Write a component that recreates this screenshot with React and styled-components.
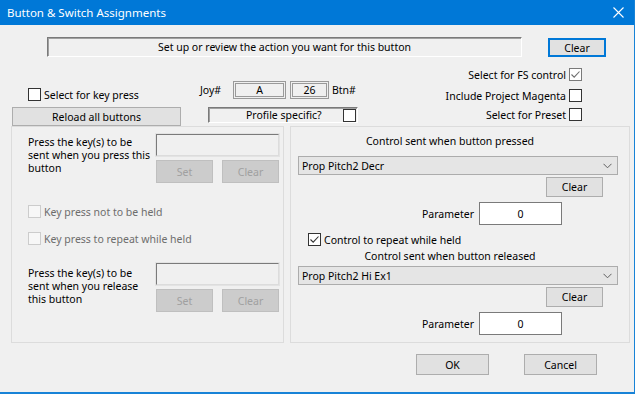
import React from "react";
import styled, { createGlobalStyle } from "styled-components";

const GlobalStyle = createGlobalStyle`
    html, body {
        margin: 0;
        padding: 0;
        background: #f0f0f0;
    }
    body {
        font-family: "Noto Sans", "Open Sans", sans-serif;
        font-size: 10.5px;
        color: #000;
    }
`;

const Window = styled.div`
    width: 635px;
    height: 394px;
    box-sizing: border-box;
    background: #f0f0f0;
    border-right: 1px solid #1883d7;
    border-bottom: 2px solid #1883d7;
    display: flex;
    flex-direction: column;
    overflow: hidden;
`;

const TitleBar = styled.div`
    height: 25px;
    flex: none;
    background: #0078d7;
    color: #fff;
    display: flex;
    align-items: center;
    justify-content: space-between;
    padding: 0 0 0 7px;
    font-size: 11.5px;
`;

const CloseBtn = styled.div`
    width: 32px;
    height: 23px;
    display: flex;
    align-items: center;
    justify-content: center;
`;

const TopRow = styled.div`
    display: flex;
    align-items: flex-start;
    margin-top: 12px;
    padding-left: 47px;
`;

const StatusBox = styled.div`
    width: 475px;
    height: 20px;
    box-sizing: border-box;
    border: 1px solid;
    border-color: #7a7a7a #fff #fff #7a7a7a;
    box-shadow: inset 1px 1px 0 #a0a0a0;
    display: flex;
    align-items: center;
    justify-content: center;
    white-space: nowrap;
`;

const Button = styled.button`
    font: inherit;
    color: ${(p) => (p.disabled ? "#a0a0a0" : "#000")};
    background: ${(p) => (p.disabled ? "#cccccc" : "#e1e1e1")};
    border: ${(p) => (p.$default ? "2px solid #0078d7" : p.disabled ? "1px solid #bfbfbf" : "1px solid #adadad")};
    width: ${(p) => p.$w || 57}px;
    height: ${(p) => p.$h || 20}px;
    padding: 0;
    margin: 0;
    box-sizing: border-box;
    display: flex;
    align-items: center;
    justify-content: center;
    flex: none;
    white-space: nowrap;
`;

const DefaultButton = styled(Button)`
    margin-left: 26px;
    margin-top: 1px;
`;

const HeaderArea = styled.div`
    display: flex;
    height: 69px;
`;

const HeaderCol = styled.div`
    display: flex;
    flex-direction: column;
    justify-content: flex-end;
    align-items: ${(p) => p.$align || "flex-start"};
`;

const LeftHeader = styled(HeaderCol)`
    margin-left: 12px;
    width: 169px;
`;

const MidHeader = styled(HeaderCol)`
    margin-left: 19px;
    padding-bottom: 3px;
`;

const RightHeader = styled(HeaderCol)`
    margin-left: auto;
    margin-right: 52px;
    padding-bottom: 5px;
    gap: 6px;
`;

const CheckRow = styled.label`
    display: flex;
    flex-direction: ${(p) => (p.$reverse ? "row-reverse" : "row")};
    align-items: center;
    gap: 3px;
    height: 13px;
    white-space: nowrap;
    color: ${(p) => (p.$disabled ? "#6d6d6d" : "#000")};
    margin-left: ${(p) => p.$ml || 0}px;
    margin-top: ${(p) => p.$mt || 0}px;
`;

const Box = styled.span`
    width: 13px;
    height: 13px;
    box-sizing: border-box;
    flex: none;
    border: 1px solid ${(p) => (p.$disabled ? "#cccccc" : p.$grey ? "#7a7a7a" : "#333")};
    background: ${(p) => (p.$disabled ? "#f7f7f7" : "#fff")};
    display: flex;
    align-items: center;
    justify-content: center;
`;

const Check = ({ checked, grey, disabled }) => (
    <Box $grey={grey} $disabled={disabled}>
        {checked && (
            <svg width="11" height="11" viewBox="0 0 11 11">
                <path
                    d="M1.5 5.5 L4.2 8.2 L9.5 2.5"
                    fill="none"
                    stroke={grey ? "#6d6d6d" : "#333"}
                    strokeWidth="1.1"
                />
            </svg>
        )}
    </Box>
);

const JoyRow = styled.div`
    display: flex;
    align-items: center;
    height: 18px;
    margin-bottom: 8px;
`;

const JoyLabel = styled.span`
    width: 33px;
`;

const JoyBox = styled.div`
    width: ${(p) => p.$w}px;
    height: 18px;
    box-sizing: border-box;
    border: 3px double #9a9a9a;
    display: flex;
    align-items: center;
    justify-content: center;
    margin-right: ${(p) => p.$mr || 0}px;
`;

const ProfileBox = styled.div`
    width: 150px;
    height: 16px;
    margin-left: 8px;
    box-sizing: border-box;
    border: 1px solid;
    border-color: #7a7a7a #fff #fff #7a7a7a;
    box-shadow: inset 1px 1px 0 #a0a0a0;
    display: flex;
    align-items: center;
    justify-content: space-between;
    padding: 0 1px 0 37px;
    white-space: nowrap;
`;

const ReloadBtn = styled(Button)`
    margin-top: 6px;
`;

const PanelRow = styled.div`
    display: flex;
    gap: 6px;
    margin-left: 11px;
    height: 217px;
`;

const Panel = styled.div`
    width: ${(p) => p.$w}px;
    box-sizing: border-box;
    border: 1px solid #dcdcdc;
    display: flex;
    flex-direction: column;
`;

const KeySection = styled.div`
    display: flex;
    margin-top: ${(p) => p.$mt}px;
    padding-left: 16px;
`;

const KeyText = styled.div`
    width: 128px;
    line-height: 13px;
    white-space: nowrap;
    padding-top: ${(p) => p.$pt || 6}px;
`;

const KeyControls = styled.div`
    display: flex;
    flex-direction: column;
    width: 123px;
    gap: 4px;
`;

const KeyInput = styled.div`
    height: 22px;
    box-sizing: border-box;
    border: 1px solid;
    border-color: #7a7a7a #dcdcdc #dcdcdc #7a7a7a;
    outline: 1px solid #e3e3e3;
    background: #f0f0f0;
`;

const BtnPair = styled.div`
    display: flex;
    justify-content: space-between;
`;

const Caption = styled.div`
    text-align: center;
    padding-right: 20px;
    margin-top: ${(p) => p.$mt || 0}px;
    line-height: 14px;
`;

const Dropdown = styled.div`
    margin: ${(p) => p.$mt}px 11px 0 7px;
    height: 19px;
    box-sizing: border-box;
    border: 1px solid #acacac;
    background: #e5e5e5;
    display: flex;
    align-items: center;
    justify-content: space-between;
    padding: 0 5px 0 3px;
`;

const RightAlign = styled.div`
    display: flex;
    justify-content: flex-end;
    padding-right: 26px;
    margin-top: 2px;
`;

const ParamRow = styled.div`
    display: flex;
    align-items: center;
    gap: 5px;
    padding-left: 131px;
    margin-top: 5px;
`;

const ParamInput = styled.div`
    width: 83px;
    height: 23px;
    box-sizing: border-box;
    border: 1px solid #7a7a7a;
    background: #fff;
    display: flex;
    align-items: center;
    justify-content: center;
`;

const Footer = styled.div`
    display: flex;
    gap: 35px;
    padding-left: 416px;
    margin-top: 11px;
`;

const Chevron = () => (
    <svg width="9" height="6" viewBox="0 0 9 6">
        <path d="M0.5 0.8 L4.5 4.8 L8.5 0.8" fill="none" stroke="#606060" strokeWidth="1" />
    </svg>
);

const KeyBlock = ({ lines, mt, pt }) => (
    <KeySection $mt={mt}>
        <KeyText $pt={pt}>
            {lines.map((l) => (
                <div key={l}>{l}</div>
            ))}
        </KeyText>
        <KeyControls>
            <KeyInput />
            <BtnPair>
                <Button disabled $h={23}>Set</Button>
                <Button disabled $h={23}>Clear</Button>
            </BtnPair>
        </KeyControls>
    </KeySection>
);

const ControlBlock = ({ value, mt }) => (
    <>
        <Dropdown $mt={mt}>
            <span>{value}</span>
            <Chevron />
        </Dropdown>
        <RightAlign>
            <Button>Clear</Button>
        </RightAlign>
        <ParamRow>
            <span>Parameter</span>
            <ParamInput>0</ParamInput>
        </ParamRow>
    </>
);

export default function App() {
    return (
        <Window>
            <GlobalStyle />
            <TitleBar>
                <span>Button &amp; Switch Assignments</span>
                <CloseBtn>
                    <svg width="11" height="11" viewBox="0 0 11 11">
                        <path d="M0.5 0.5 L10.5 10.5 M10.5 0.5 L0.5 10.5" stroke="#fff" strokeWidth="1.1" />
                    </svg>
                </CloseBtn>
            </TitleBar>

            <TopRow>
                <StatusBox>Set up or review the action you want for this button</StatusBox>
                <DefaultButton $default $w={58} $h={19}>
                    Clear
                </DefaultButton>
            </TopRow>

            <HeaderArea>
                <LeftHeader>
                    <CheckRow $ml={16}>
                        <Check />
                        Select for key press
                    </CheckRow>
                    <ReloadBtn $w={169} $h={19}>Reload all buttons</ReloadBtn>
                </LeftHeader>
                <MidHeader>
                    <JoyRow>
                        <JoyLabel>Joy#</JoyLabel>
                        <JoyBox $w={53} $mr={4}>A</JoyBox>
                        <JoyBox $w={39} $mr={3}>26</JoyBox>
                        <span>Btn#</span>
                    </JoyRow>
                    <ProfileBox>
                        <span>Profile specific?</span>
                        <Check />
                    </ProfileBox>
                </MidHeader>
                <RightHeader $align="flex-end">
                    <CheckRow $reverse>
                        <Check checked grey />
                        Select for FS control
                    </CheckRow>
                    <CheckRow $reverse $mt={2}>
                        <Check />
                        Include Project Magenta
                    </CheckRow>
                    <CheckRow $reverse>
                        <Check />
                        Select for Preset
                    </CheckRow>
                </RightHeader>
            </HeaderArea>

            <PanelRow>
                <Panel $w={273}>
                    <KeyBlock
                        mt={7}
                        pt={2}
                        lines={["Press the key(s) to be", "sent when you press this", "button"]}
                    />
                    <CheckRow $disabled $ml={16} $mt={22}>
                        <Check disabled />
                        Key press not to be held
                    </CheckRow>
                    <CheckRow $disabled $ml={16} $mt={14}>
                        <Check disabled />
                        Key press to repeat while held
                    </CheckRow>
                    <KeyBlock
                        mt={18}
                        pt={4}
                        lines={["Press the key(s) to be", "sent when you release", "this button"]}
                    />
                </Panel>
                <Panel $w={340}>
                    <Caption $mt={7}>Control sent when button pressed</Caption>
                    <ControlBlock mt={8} value="Prop Pitch2 Decr" />
                    <CheckRow $ml={17} $mt={8}>
                        <Check checked />
                        Control to repeat while held
                    </CheckRow>
                    <Caption $mt={3}>Control sent when button released</Caption>
                    <ControlBlock mt={3} value="Prop Pitch2 Hi Ex1" />
                </Panel>
            </PanelRow>

            <Footer>
                <Button $w={73} $h={21}>OK</Button>
                <Button $w={73} $h={21}>Cancel</Button>
            </Footer>
        </Window>
    );
}
